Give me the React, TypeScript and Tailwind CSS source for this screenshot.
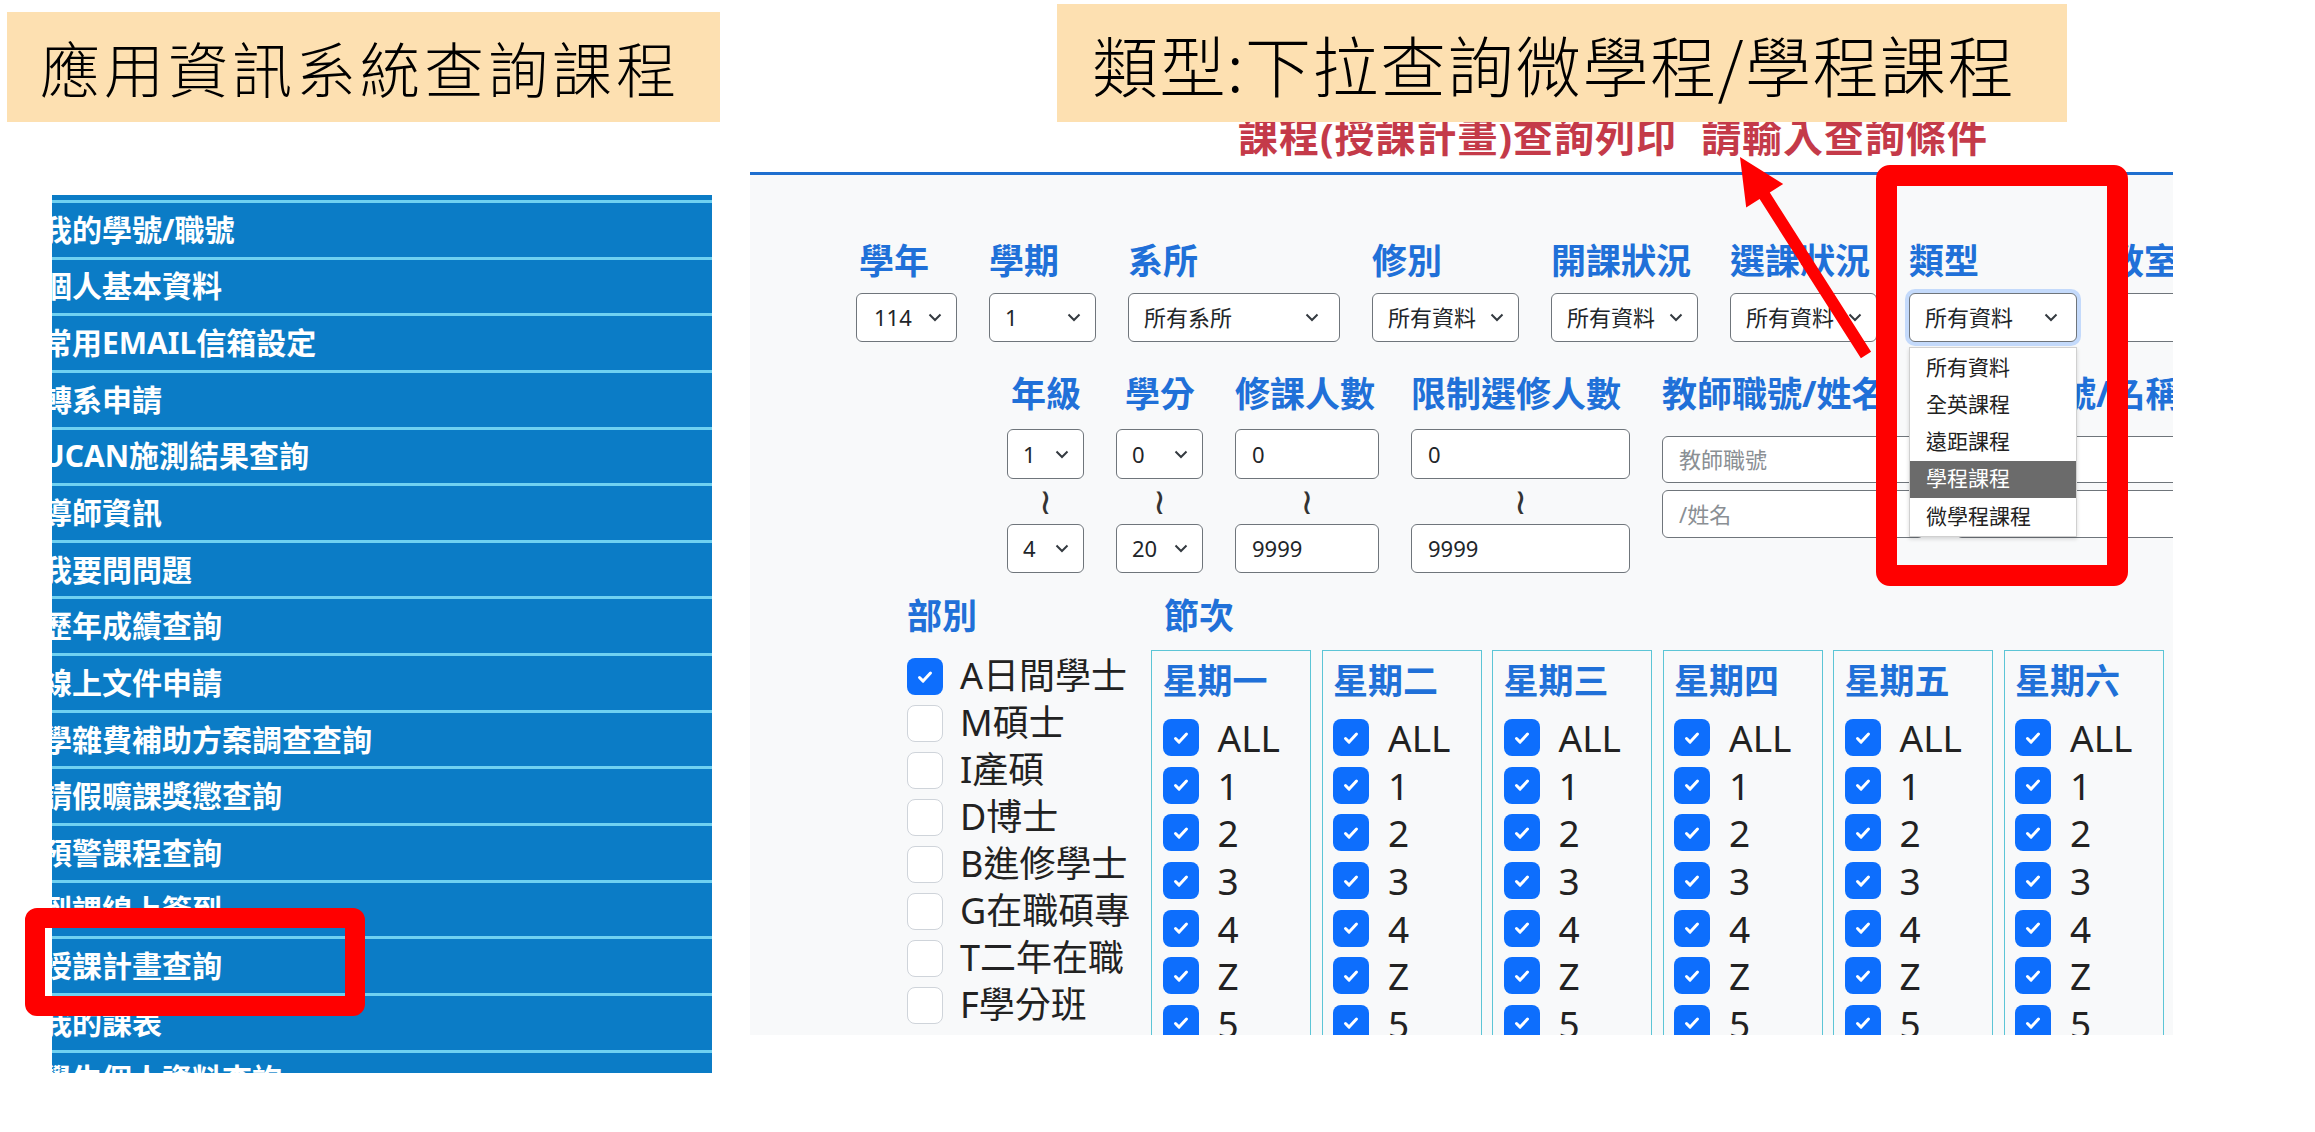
import React from "react";

const menu = [
  "我的學號/職號",
  "個人基本資料",
  "常用EMAIL信箱設定",
  "轉系申請",
  "UCAN施測結果查詢",
  "導師資訊",
  "我要問問題",
  "歷年成績查詢",
  "線上文件申請",
  "學雜費補助方案調查查詢",
  "請假曠課獎懲查詢",
  "預警課程查詢",
  "到課線上簽到",
  "授課計畫查詢",
  "我的課表",
  "學生個人資料查詢",
];

const departments: [string, boolean][] = [
  ["A日間學士", true],
  ["M碩士", false],
  ["I產碩", false],
  ["D博士", false],
  ["B進修學士", false],
  ["G在職碩專", false],
  ["T二年在職", false],
  ["F學分班", false],
];

const days = ["星期一", "星期二", "星期三", "星期四", "星期五", "星期六", "星期日"];
const periods = ["ALL", "1", "2", "3", "4", "Z", "5", "6", "7", "8"];

function Chevron() {
  return (
    <svg width="14" height="9" viewBox="0 0 14 9" className="shrink-0">
      <path d="M1.5 1.5l5.5 5.5 5.5-5.5" fill="none" stroke="#343a40" strokeWidth="2" />
    </svg>
  );
}

function Check({ checked }: { checked: boolean }) {
  if (!checked) {
    return <span className="h-[37px] w-[36px] shrink-0 rounded-[8px] border-[1.5px] border-[#cfd4da] bg-white" />;
  }
  return (
    <span className="flex h-[37px] w-[36px] shrink-0 items-center justify-center rounded-[8px] bg-[#0d6efd]">
      <svg width="20" height="20" viewBox="0 0 20 20">
        <path d="M4.5 10.5l3.6 3.6 7.4-8" fill="none" stroke="white" strokeWidth="3" strokeLinecap="round" strokeLinejoin="round" />
      </svg>
    </span>
  );
}

function Select({ value, className = "" }: { value: string; className?: string }) {
  return (
    <div
      className={`flex shrink-0 items-center justify-between rounded-[6px] border-[1.5px] border-[#6f757b] bg-white pl-[15px] pr-[14px] text-[22px] text-[#212529] ${className}`}
    >
      <span>{value}</span>
      <Chevron />
    </div>
  );
}

function Field({ value, placeholder = false, className = "" }: { value: string; placeholder?: boolean; className?: string }) {
  return (
    <div
      className={`flex shrink-0 items-center rounded-[6px] border-[1.5px] border-[#6f757b] bg-white pl-[16px] text-[22px] ${placeholder ? "text-[#8a8f94]" : "text-[#212529]"} ${className}`}
    >
      {value}
    </div>
  );
}

function Label({ children, className = "" }: { children: React.ReactNode; className?: string }) {
  return (
    <div className={`h-[44px] whitespace-nowrap text-[35px] font-bold leading-[44px] text-[#2070d8] ${className}`}>
      {children}
    </div>
  );
}

function Tilde() {
  return (
    <div className="flex h-[45px] items-center justify-center font-['DejaVu_Sans',sans-serif] text-[36px] leading-none text-[#333]">
      ≀
    </div>
  );
}

function Sidebar() {
  return (
    <div className="ml-[52px] mt-[195px] h-[878px] w-[660px] shrink-0 overflow-hidden bg-[#0b7cc6]">
      <div className="h-[5px]" />
      {menu.map((item) => (
        <div key={item} className="flex h-[56.65px] items-center border-t-[3px] border-[#6fd1f1]">
          <span className="-ml-[10px] whitespace-nowrap text-[30px] font-bold leading-none text-white">{item}</span>
        </div>
      ))}
    </div>
  );
}

function QueryPanel() {
  return (
    <div className="ml-[38px] mt-[108px] w-[1423px] shrink-0">
      <div className="flex h-[64px] gap-[24px] pl-[488px] pt-[9px] text-[40px] font-bold leading-[40px] tracking-[1px] text-[#c43a49]">
        <span className="whitespace-nowrap">課程(授課計畫)查詢列印</span>
        <span className="whitespace-nowrap">請輸入查詢條件</span>
      </div>
      <div className="h-[3px] bg-[#1f6fcf]" />
      <div className="h-[860px] overflow-hidden bg-[#f8f9fa] pt-[64px]">
        {/* row 1 */}
        <div className="flex gap-[32px] pl-[106px]">
          <div className="w-[101px] shrink-0">
            <Label className="pl-[3px]">學年</Label>
            <Select value="114" className="mt-[10px] h-[49px] w-[101px] pl-[17px]" />
          </div>
          <div className="w-[107px] shrink-0">
            <Label>學期</Label>
            <Select value="1" className="mt-[10px] h-[49px] w-[107px]" />
          </div>
          <div className="w-[212px] shrink-0">
            <Label>系所</Label>
            <Select value="所有系所" className="mt-[10px] h-[49px] w-[212px] pl-[13px] pr-[20px]" />
          </div>
          <div className="w-[147px] shrink-0">
            <Label>修別</Label>
            <Select value="所有資料" className="mt-[10px] h-[49px] w-[147px] pl-[13px]" />
          </div>
          <div className="w-[147px] shrink-0">
            <Label>開課狀況</Label>
            <Select value="所有資料" className="mt-[10px] h-[49px] w-[147px] pl-[13px]" />
          </div>
          <div className="w-[147px] shrink-0">
            <Label>選課狀況</Label>
            <Select value="所有資料" className="mt-[10px] h-[49px] w-[147px] pl-[13px]" />
          </div>
          <div className="w-[168px] shrink-0">
            <Label>類型</Label>
            <Select
              value="所有資料"
              className="mt-[10px] h-[49px] w-[168px] pl-[13px] pr-[18px] shadow-[0_0_0_4px_rgba(13,110,253,0.22)]"
            />
          </div>
          <div className="w-[200px] shrink-0">
            <Label>教室</Label>
            <Field value="" className="mt-[10px] h-[49px] w-[200px]" />
          </div>
        </div>

        {/* row 2 */}
        <div className="mt-[30px] flex gap-[32px] pl-[257px]">
          <div className="w-[77px] shrink-0">
            <Label className="pl-[4px]">年級</Label>
            <Select value="1" className="mt-[13px] h-[50px] w-[77px] pl-[14px] pr-[11px]" />
            <Tilde />
            <Select value="4" className="h-[49px] w-[77px] pl-[14px] pr-[11px]" />
          </div>
          <div className="w-[87px] shrink-0">
            <Label className="pl-[9px]">學分</Label>
            <Select value="0" className="mt-[13px] h-[50px] w-[87px] pl-[14px] pr-[13px]" />
            <Tilde />
            <Select value="20" className="h-[49px] w-[87px] pl-[14px] pr-[13px]" />
          </div>
          <div className="w-[144px] shrink-0">
            <Label>修課人數</Label>
            <Field value="0" className="mt-[13px] h-[50px] w-[144px]" />
            <Tilde />
            <Field value="9999" className="h-[49px] w-[144px]" />
          </div>
          <div className="w-[219px] shrink-0">
            <Label>限制選修人數</Label>
            <Field value="0" className="mt-[13px] h-[50px] w-[219px]" />
            <Tilde />
            <Field value="9999" className="h-[49px] w-[219px]" />
          </div>
          <div className="w-[262px] shrink-0">
            <Label>教師職號/姓名</Label>
            <Field value="教師職號" placeholder className="mt-[20px] h-[47px] w-[262px]" />
            <Field value="/姓名" placeholder className="mt-[7px] h-[48px] w-[262px]" />
          </div>
          <div className="w-[260px] shrink-0">
            <Label>課程代號/名稱</Label>
            <Field value="" className="mt-[20px] h-[47px] w-[260px]" />
            <Field value="" className="mt-[7px] h-[48px] w-[260px]" />
          </div>
        </div>

        {/* 部別 / 節次 */}
        <div className="mt-[21px] flex pl-[157px]">
          <div className="w-[244px] shrink-0">
            <Label className="text-[34px]">部別</Label>
            <div className="mt-[20px]">
              {departments.map(([name, checked]) => (
                <div key={name} className="flex h-[47px] items-start gap-[17px]">
                  <Check checked={checked} />
                  <span className="-mt-[4px] whitespace-nowrap text-[36px] leading-[44px] text-[#222]">{name}</span>
                </div>
              ))}
            </div>
          </div>
          <div className="shrink-0">
            <Label className="pl-[13px]">節次</Label>
            <div className="mt-[12px] flex gap-[10.5px]">
              {days.map((d) => (
                <div key={d} className="h-[420px] w-[160px] shrink-0 border-[1.5px] border-[#5cc5d6] pl-[10.5px] pt-[8px]">
                  <div className="whitespace-nowrap text-[35px] font-bold leading-[44px] text-[#2070d8]">{d}</div>
                  <div className="mt-[11px]">
                    {periods.map((p) => (
                      <div key={p} className="flex h-[47.6px] items-center gap-[19px]">
                        <Check checked />
                        <span className="text-[37px] leading-none text-[#222]">{p}</span>
                      </div>
                    ))}
                  </div>
                </div>
              ))}
            </div>
          </div>
        </div>
      </div>
    </div>
  );
}

export default function App() {
  return (
    <div className="relative h-[1132px] w-[2315px] overflow-hidden bg-white font-['Noto_Sans','Noto_Sans_CJK_TC',sans-serif]">
      <div className="flex items-start">
        <Sidebar />
        <QueryPanel />
      </div>

      {/* open dropdown of 類型 */}
      <div className="absolute left-[1909px] top-[347px] w-[168px] border border-[#d0d0d0] bg-white py-[1px] shadow-[0_2px_4px_rgba(0,0,0,0.15)]">
        {["所有資料", "全英課程", "遠距課程", "學程課程", "微學程課程"].map((o) => (
          <div
            key={o}
            className={`flex h-[37.2px] items-center pl-[16px] text-[21px] ${o === "學程課程" ? "bg-[#6b6b6b] text-white" : "text-[#222]"}`}
          >
            {o}
          </div>
        ))}
      </div>

      {/* annotation callouts */}
      <div className="absolute left-[7px] top-[12px] flex h-[110px] w-[713px] items-center bg-[#fde0b1] pl-[33px] font-['Noto_Sans_CJK_TC',sans-serif] text-[60px] font-light tracking-[4px] text-black">
        應用資訊系統查詢課程
      </div>
      <div className="absolute left-[1057px] top-[4px] flex h-[118px] w-[1010px] items-center bg-[#fde0b1] pl-[35px] font-['Noto_Sans_CJK_TC',sans-serif] text-[66px] font-light tracking-[1.5px] text-black">
        類型:下拉查詢微學程/學程課程
      </div>

      <div className="absolute left-[25px] top-[908px] h-[108px] w-[340px] rounded-[12px] border-[20px] border-[#ff0000]" />
      <div className="absolute left-[1876px] top-[165px] h-[421px] w-[252px] rounded-[14px] border-[21px] border-[#ff0000]" />

      <svg className="pointer-events-none absolute inset-0" width="2315" height="1132" viewBox="0 0 2315 1132">
        <polygon
          fill="#ff0000"
          points="1740,157 1783.2,184 1769.8,192.6 1871.1,351.8 1860.9,358.2 1759.6,199 1746.2,207.6"
        />
      </svg>
    </div>
  );
}
